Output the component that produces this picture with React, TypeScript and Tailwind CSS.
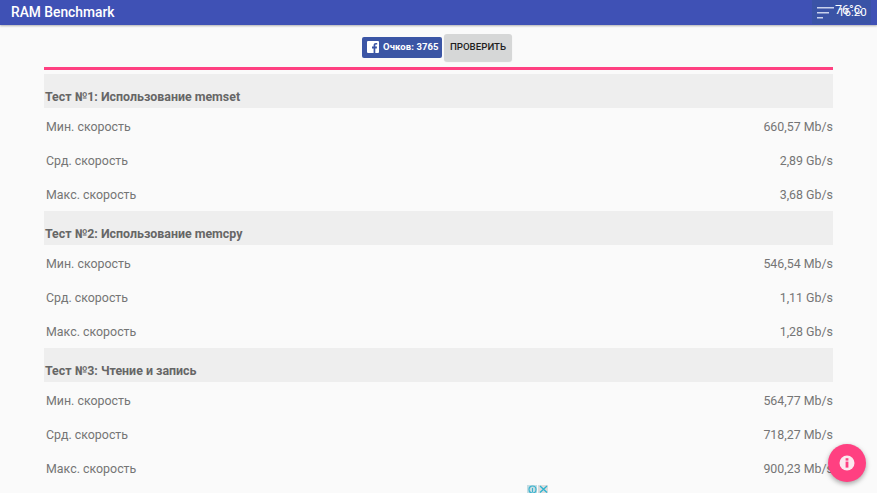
import React from "react";

const sections = [
  { title: "Тест №1: Использование memset", vals: ["660,57 Mb/s", "2,89 Gb/s", "3,68 Gb/s"] },
  { title: "Тест №2: Использование memcpy", vals: ["546,54 Mb/s", "1,11 Gb/s", "1,28 Gb/s"] },
  { title: "Тест №3: Чтение и запись", vals: ["564,77 Mb/s", "718,27 Mb/s", "900,23 Mb/s"] },
];
const labels = ["Мин. скорость", "Срд. скорость", "Макс. скорость"];

export default function App() {
  return (
    <div className="relative h-[493px] w-[877px] overflow-hidden bg-[#fafafa] font-['Roboto',sans-serif]">
      <header className="flex h-[25px] items-center bg-[#3f51b5] pl-[11px] shadow-[0_1px_2px_rgba(0,0,0,0.3)]">
        <span className="text-[13.8px] font-medium leading-none text-white">RAM Benchmark</span>
      </header>

      <div className="absolute left-[812px] top-0 h-[24px] w-[59px] bg-[#3a53a6]">
        <svg className="absolute left-[4px] top-[6px]" width="20" height="14" viewBox="0 0 20 14">
          <rect x="1" y="1" width="17" height="1.5" fill="#c9d2ec" />
          <rect x="1" y="6" width="12" height="1.5" fill="#c9d2ec" />
          <rect x="1" y="11" width="6" height="1.5" fill="#c9d2ec" />
        </svg>
        <span className="absolute left-[23px] top-[2px] text-[12.5px] leading-[15px] text-white">76°C</span>
        <span className="absolute left-[26px] top-[5px] text-[11.5px] leading-[15px] text-white">16:20</span>
      </div>

      <main className="flex flex-col px-[44px]">
        <div className="flex h-[42px] items-center justify-center pr-[3px] pt-[2px]">
          <div className="flex h-[21px] w-[80px] items-center rounded-[2px] bg-[#3b55a5] pl-[5px] text-white">
            <svg width="12" height="12" viewBox="0 0 12 12">
              <rect width="12" height="12" rx="1" fill="#fff" />
              <path d="M8.3 12V7.4h1.5l.2-1.8H8.3V4.5c0-.5.2-.9.9-.9h1V2c-.2 0-.7-.1-1.3-.1-1.4 0-2.3.8-2.3 2.4v1.3H5v1.8h1.6V12z" fill="#3b55a5" />
            </svg>
            <span className="ml-[4px] whitespace-nowrap text-[9.5px] font-bold leading-none tracking-[0.1px]">Очков: 3765</span>
          </div>
          <button className="ml-[2px] flex h-[27px] w-[68px] items-center justify-center rounded-[3px] bg-[#d6d7d7] text-[9.7px] font-medium text-[#1f1f1f] shadow-[0_1px_1px_rgba(0,0,0,0.15)]">
            ПРОВЕРИТЬ
          </button>
        </div>
        <div className="h-[3px] bg-[#ff4081]" />
        <div className="mt-[4px] flex flex-col">
          {sections.map((s) => (
            <section key={s.title} className="flex flex-col pb-[1px]">
              <div className="flex h-[34px] items-end bg-[#eeeeee] pb-[4px] pl-[1px] text-[12.4px] font-bold leading-[15px] text-[#666666]">
                {s.title}
              </div>
              {labels.map((l, i) => (
                <div key={l} className="flex h-[34px] items-center justify-between pl-[2px] pt-[4px] text-[12.4px] text-[#757575]">
                  <span>{l}</span>
                  <span>{s.vals[i]}</span>
                </div>
              ))}
            </section>
          ))}
        </div>
      </main>

      <div className="absolute left-[828px] top-[444px] flex h-[38px] w-[38px] items-center justify-center rounded-full bg-[#ff4081] shadow-[0_2px_5px_rgba(0,0,0,0.35)]">
        <svg width="16" height="16" viewBox="0 0 16 16">
          <circle cx="8" cy="8" r="7.5" fill="#fbe9ef" />
          <rect x="6.6" y="3.2" width="2.8" height="2.4" fill="#ff4081" />
          <rect x="6.6" y="6.6" width="2.8" height="6" fill="#ff4081" />
        </svg>
      </div>

      <div className="absolute left-[527px] top-[485px] flex gap-[1px]">
        <div className="flex h-[8px] w-[10px] items-start justify-center bg-[#c5dde3]">
          <svg width="9" height="8" viewBox="0 0 9 8"><circle cx="4.5" cy="4.5" r="3.5" fill="none" stroke="#3db4cf" strokeWidth="1.2" /><rect x="4" y="3" width="1" height="4" fill="#3db4cf" /></svg>
        </div>
        <div className="flex h-[8px] w-[10px] items-start justify-center bg-[#dcdcdc]">
          <svg width="9" height="8" viewBox="0 0 9 8"><path d="M1 1l7 6.5M8 1l-7 6.5" stroke="#2bb3d0" strokeWidth="1.3" /></svg>
        </div>
      </div>
    </div>
  );
}
